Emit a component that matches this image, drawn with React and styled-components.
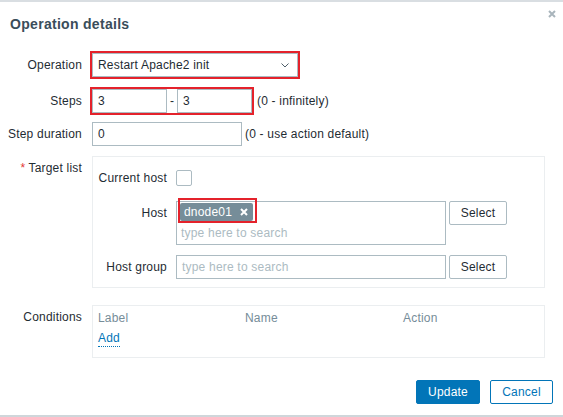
import React from 'react'
import styled, { createGlobalStyle } from 'styled-components'

const GlobalStyle = createGlobalStyle`
    html, body {
        margin: 0;
        padding: 0;
        background: #fff;
    }
    body {
        font-family: "Liberation Sans", Arial, sans-serif;
        font-size: 12px;
        letter-spacing: 0.2px;
        color: #1f2c33;
    }
`

const Dialog = styled.div`
    position: relative;
    box-sizing: border-box;
    width: 563px;
    height: 417px;
    background: #fff;
    border-top: 2px solid #d9dee2;
    border-bottom: 2px solid #cfd6da;
`

const Header = styled.div`
    padding: 14px 10px 0;
`

const Title = styled.h4`
    margin: 0;
    font-size: 14px;
    line-height: 16px;
    font-weight: bold;
    letter-spacing: 0.3px;
    color: #3a4d5a;
`

const CloseButton = styled.button`
    position: absolute;
    top: 8px;
    right: 7px;
    width: 8px;
    height: 8px;
    padding: 0;
    border: 0;
    background: none;
    display: flex;
`

const Form = styled.div`
    margin-top: 21px;
    display: flex;
    flex-direction: column;
`

const Row = styled.div`
    display: flex;
    align-items: flex-start;
    margin-top: ${props => props.gap || 0}px;
`

const Label = styled.div`
    width: ${props => props.width || 82}px;
    flex-shrink: 0;
    text-align: right;
    line-height: 24px;
    margin-right: ${props => props.space || 10}px;
    white-space: nowrap;
`

const Required = styled.span`
    color: #e33734;
    margin-right: 3px;
`

const Highlight = styled.div`
    display: flex;
    outline: 2px solid #e4222b;
`

const SelectBox = styled.div`
    box-sizing: border-box;
    width: 206px;
    height: 24px;
    border: 1px solid #acbbc2;
    padding: 0 8px 0 5px;
    display: flex;
    align-items: center;
    justify-content: space-between;
    background: #fff;
`

const Input = styled.div`
    box-sizing: border-box;
    width: ${props => props.width}px;
    height: 24px;
    border: 1px solid #acbbc2;
    padding: 0 5px;
    line-height: 22px;
    background: #fff;
    color: ${props => props.placeholder ? '#acbbc2' : '#1f2c33'};
`

const Dash = styled.span`
    width: 10px;
    text-align: center;
    line-height: 24px;
`

const Hint = styled.span`
    line-height: 24px;
    margin-left: ${props => props.space || 4}px;
`

const Panel = styled.div`
    box-sizing: border-box;
    width: 453px;
    border: 1px solid #ebeef0;
    padding: ${props => props.pad};
`

const Checkbox = styled.span`
    box-sizing: border-box;
    display: block;
    width: 16px;
    height: 16px;
    margin-top: 4px;
    border: 1px solid #acbbc2;
    border-radius: 2px;
    background: #fff;
`

const MultiSelect = styled.div`
    box-sizing: border-box;
    width: 270px;
    height: 44px;
    border: 1px solid #acbbc2;
    padding: 1px 3px 0;
    display: flex;
    flex-direction: column;
`

const Chip = styled.span`
    position: relative;
    align-self: flex-start;
    display: flex;
    align-items: center;
    height: 18px;
    padding: 0 5px 0 4px;
    border-radius: 2px;
    background: #768d99;
    color: #fff;
    &::after {
        content: '';
        position: absolute;
        top: -5px;
        left: -2px;
        right: -4px;
        bottom: -2px;
        border: 2px solid #e4222b;
        pointer-events: none;
    }
`

const ChipRemove = styled.svg`
    margin-left: 8px;
`

const Placeholder = styled.span`
    color: #acbbc2;
    line-height: 20px;
    margin-top: 2px;
    padding-left: 1px;
`

const Button = styled.button`
    box-sizing: border-box;
    width: ${props => props.width}px;
    height: 24px;
    padding: 0;
    border-radius: 2px;
    font-family: inherit;
    font-size: 12px;
    letter-spacing: 0.2px;
    border: 1px solid ${props => props.primary || props.outline ? '#0275b8' : '#acbbc2'};
    background: ${props => props.primary ? '#0275b8' : '#fff'};
    color: ${props => props.primary ? '#fff' : props.outline ? '#0275b8' : '#1f2c33'};
    margin-left: ${props => props.space || 0}px;
`

const Columns = styled.div`
    display: grid;
    grid-template-columns: 147px 158px 1fr;
    line-height: 18px;
    color: ${props => props.muted ? '#768d99' : 'inherit'};
    margin-top: ${props => props.gap || 0}px;
`

const AddLink = styled.span`
    justify-self: start;
    color: #0275b8;
    line-height: 16px;
    border-bottom: 1px dotted #0275b8;
`

const Footer = styled.div`
    display: flex;
    justify-content: flex-end;
    padding-right: 10px;
    margin-top: 22px;
`

const Chevron = () => (
    <svg width="8" height="5" viewBox="0 0 8 5">
        <path d="M0.5 0.5 L4 4 L7.5 0.5" fill="none" stroke="#4f5f6a" strokeWidth="1" />
    </svg>
)

const App = () => {
    return (
        <Dialog>
            <GlobalStyle />
            <Header>
                <Title>Operation details</Title>
            </Header>
            <CloseButton aria-label="Close">
                <svg width="8" height="8" viewBox="0 0 8 8">
                    <path d="M1 1 L7 7 M7 1 L1 7" stroke="#a9b5bc" strokeWidth="2" />
                </svg>
            </CloseButton>
            <Form>
                <Row>
                    <Label>Operation</Label>
                    <Highlight>
                        <SelectBox>
                            <span>Restart Apache2 init</span>
                            <Chevron />
                        </SelectBox>
                    </Highlight>
                </Row>
                <Row gap={12}>
                    <Label>Steps</Label>
                    <Highlight>
                        <Input width={75}>3</Input>
                        <Dash>-</Dash>
                        <Input width={75}>3</Input>
                    </Highlight>
                    <Hint space={5}>(0 - infinitely)</Hint>
                </Row>
                <Row gap={9}>
                    <Label>Step duration</Label>
                    <Input width={150}>0</Input>
                    <Hint space={3}>(0 - use action default)</Hint>
                </Row>
                <Row gap={10}>
                    <Label><Required>*</Required>Target list</Label>
                    <Panel pad="9px 5px 8px">
                        <Row>
                            <Label width={69} space={9}>Current host</Label>
                            <Checkbox />
                        </Row>
                        <Row gap={11}>
                            <Label width={69} space={9}>Host</Label>
                            <MultiSelect>
                                <Chip>
                                    dnode01
                                    <ChipRemove width="8" height="8" viewBox="0 0 8 8">
                                        <path d="M1 1 L7 7 M7 1 L1 7" stroke="#fff" strokeWidth="2" />
                                    </ChipRemove>
                                </Chip>
                                <Placeholder>type here to search</Placeholder>
                            </MultiSelect>
                            <Button width={58} space={3}>Select</Button>
                        </Row>
                        <Row gap={10}>
                            <Label width={69} space={9}>Host group</Label>
                            <Input width={270} placeholder="true">type here to search</Input>
                            <Button width={58} space={3}>Select</Button>
                        </Row>
                    </Panel>
                </Row>
                <Row gap={17}>
                    <Label>Conditions</Label>
                    <Panel pad="3px 5px 10px">
                        <Columns muted>
                            <span>Label</span>
                            <span>Name</span>
                            <span>Action</span>
                        </Columns>
                        <Columns gap={3}>
                            <AddLink>Add</AddLink>
                        </Columns>
                    </Panel>
                </Row>
            </Form>
            <Footer>
                <Button width={64} primary>Update</Button>
                <Button width={63} outline space={10}>Cancel</Button>
            </Footer>
        </Dialog>
    )
}

export default App
